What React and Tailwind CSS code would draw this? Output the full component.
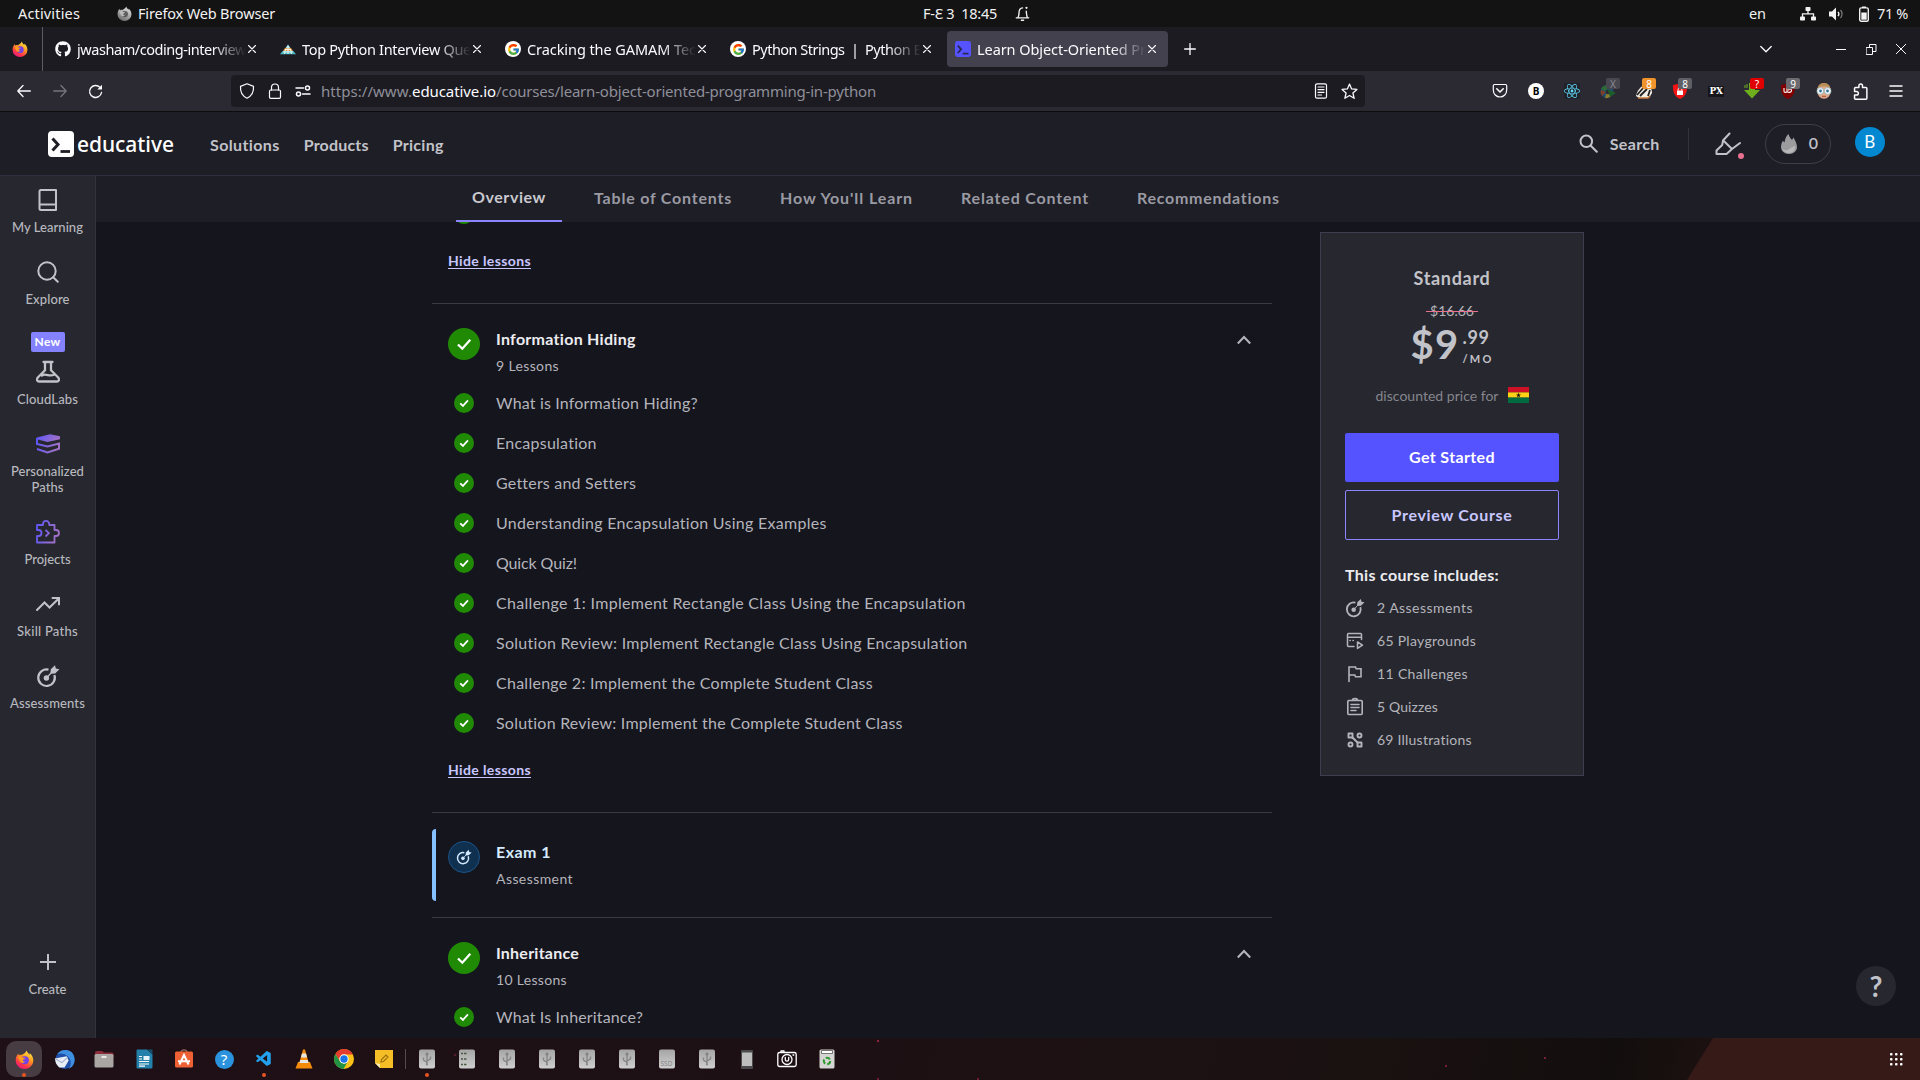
import React, { useLayoutEffect, useRef, useState } from "react";
import { FaGithub, FaReact } from "react-icons/fa";
import { FcGoogle } from "react-icons/fc";
import { VscVscode } from "react-icons/vsc";

/* Single line of text, tracked so that it spans `w` pixels. */
function Fit({ w, className = "", children }) {
  const ref = useRef(null);
  const [ls, setLs] = useState(0);
  useLayoutEffect(() => {
    const natural = ref.current.getBoundingClientRect().width;
    setLs((w - natural) / String(children).length);
  }, []);
  return (
    <span ref={ref} className={"inline-block whitespace-pre " + className} style={{ letterSpacing: ls + "px" }}>
      {children}
    </span>
  );
}

const Line = ({ size = 16, box = 16, sw = 1.2, className = "", children }) => (
  <svg width={size} height={size} viewBox={`0 0 ${box} ${box}`} fill="none" stroke="currentColor" strokeWidth={sw} strokeLinecap="round" strokeLinejoin="round" className={"shrink-0 " + className}>
    {children}
  </svg>
);

function Firefox({ size, gray }) {
  const id = gray ? "fg" : "fc" + size;
  return (
    <svg width={size} height={size} viewBox="0 0 20 20" className="shrink-0">
      <defs>
        <linearGradient id={id} x1="0.8" y1="0" x2="0.25" y2="1">
          <stop offset="0" stopColor={gray ? "#e8e8e8" : "#fff44f"} />
          <stop offset="0.4" stopColor={gray ? "#b5b5b5" : "#ff9a1f"} />
          <stop offset="0.75" stopColor={gray ? "#8a8a8a" : "#ff3647"} />
          <stop offset="1" stopColor={gray ? "#666" : "#e31587"} />
        </linearGradient>
      </defs>
      <path d="M12.4.5c.3 2 1.6 3 3 4.400.2-.7.1-1.300 0-1.700 2.300 1.800 3.900 4.700 3.900 7.800A9.300 9 0 0 1 .7 11c0-3.200 1.300-5.300 2.700-7.200.1 1 .3 1.400.7 1.800 1-.5 2-.6 3-.4C8.500 4 10.800 3.800 12.400.5z" fill={`url(#${id})`} />
      <circle cx="10.300" cy="10.800" r="4.300" fill={gray ? "#5d5d5d" : "#7542e5"} />
      <path d="M3 7.500c2-1.300 4-.7 5.200.5l2.600.3c-.3 1.200-2 1.400-2.400 2.200-.5 1.300 1 2.200 2.500 1.700-1.800 2.200-5 1.700-6-1L3 7.500z" fill={gray ? "#bbb" : "#ff9a1f"} />
    </svg>
  );
}

const EduMark = ({ size, h, bg, fg }) => (
  <svg width={size} height={h} viewBox="0 0 26 26" preserveAspectRatio="none" className="shrink-0">
    <rect width="26" height="26" rx="4" fill={bg} />
    <path d="M4.500 7.500l5.500 6-5.500 6" fill="none" stroke={fg} strokeWidth="3" />
    <path d="M12.500 20.500h9.500" stroke={fg} strokeWidth="2.800" />
  </svg>
);

const Pyramid = () => (
  <svg width="16" height="16" viewBox="0 0 16 16" className="shrink-0">
    <path d="M8 3.500l2.500 3.500h-5z" fill="#9adfe6" />
    <path d="M5 7h6l2 3H3z" fill="#e9a14b" />
    <path d="M2.600 10h10.800L16 13.300H0z" fill="#4bb9c4" />
    <path d="M4.500 13l1.200-5M8 13V5M11.500 13l-1.200-5M3 11h10M5 8.500h6" stroke="#eef8f8" strokeWidth=".9" />
  </svg>
);

const Close = () => (
  <Line size={8} box={8} sw={1.1}><path d="M.5.500l7 7M7.500.500l-7 7" /></Line>
);

function Tab({ icon, text, active }) {
  return (
    <div className={"mr-1 flex h-9 w-[221px] shrink-0 items-center rounded pl-2 " + (active ? "bg-[#42414d]" : "")}>
      <span className="flex w-[22px] shrink-0">{icon}</span>
      <span className="w-[169px] shrink-0 text-[14.5px] leading-9 text-[#fbfbfe] [mask-image:linear-gradient(to_right,#000_80%,transparent)]">
        <Fit w={169}>{text}</Fit>
      </span>
      <span className="ml-[2px] text-[#fbfbfe]"><Close /></span>
    </div>
  );
}

function TopBar() {
  return (
    <div className="flex h-[27px] items-center bg-[#131313] text-[14.5px] leading-[27px] text-[#f2f2f2]">
      <Fit w={62} className="ml-[18px]">Activities</Fit>
      <span className="ml-[37px] flex"><Firefox size={15} gray /></span>
      <Fit w={137} className="ml-[6px]">Firefox Web Browser</Fit>
      <Fit w={74} className="ml-[648px]">F-Ɛ 3  18:45</Fit>
      <Line size={17} box={15} sw={1.200} className="ml-[17px]">
        <path d="M2 11.300h11M3.500 11c1-1.300.8-3 1-5 .2-2 1-3.300 3-3.500M10.800 5.500c.2 2 .2 4 1 5.500M6.500 13.500h2" />
        <circle cx="11" cy="2.500" r="1" fill="currentColor" stroke="none" />
      </Line>
      <Fit w={17} className="ml-[718px]">en</Fit>
      <svg width="16" height="14" viewBox="0 0 16 14" fill="#f2f2f2" className="ml-[34px] shrink-0">
        <rect x="5.500" y="0" width="5" height="4" rx=".8" /><rect x="0" y="9.500" width="5" height="4" rx=".8" /><rect x="11" y="9.500" width="5" height="4" rx=".8" />
        <path d="M8 4v3M2.500 10V6.800h11V10" fill="none" stroke="#f2f2f2" strokeWidth="1.300" />
      </svg>
      <svg width="15" height="14" viewBox="0 0 15 14" className="ml-[13px] shrink-0">
        <path d="M0 4.500h3l4-4v13l-4-4H0z" fill="#f2f2f2" />
        <path d="M9 4.800c1 1.200 1 3.200 0 4.400" fill="none" stroke="#f2f2f2" strokeWidth="1.300" />
        <path d="M11.500 3c2 2.200 2 5.800 0 8" fill="none" stroke="#777" strokeWidth="1.300" />
      </svg>
      <svg width="10" height="16" viewBox="0 0 10 16" className="ml-[15px] shrink-0">
        <path d="M3 .5h4v1.500H3z" fill="#f2f2f2" />
        <rect x=".7" y="1.900" width="8.600" height="13.400" rx="1.500" fill="none" stroke="#f2f2f2" strokeWidth="1.400" />
        <rect x="2.300" y="6.500" width="5.400" height="7.200" fill="#f2f2f2" />
      </svg>
      <Fit w={31} className="ml-[8px]">71 %</Fit>
    </div>
  );
}

const GoogleIcon = () => (
  <span className="flex h-4 w-4 items-center justify-center rounded-full bg-white"><FcGoogle size={13} /></span>
);

function TabStrip() {
  return (
    <div className="flex h-[44px] items-center bg-[#1c1b22] text-[#fbfbfe]">
      <span className="ml-3 flex"><Firefox size={16} /></span>
      <span className="ml-[14px] mr-1 h-full w-px bg-[#5b5b66]" />
      <Tab icon={<FaGithub size={16} />} text="jwasham/coding-interview" />
      <Tab icon={<Pyramid />} text="Top Python Interview Que" />
      <Tab icon={<GoogleIcon />} text="Cracking the GAMAM Tec" />
      <Tab icon={<GoogleIcon />} text="Python Strings  |  Python E" />
      <Tab icon={<EduMark size={16} h={16} bg="#5553ff" fg="#2a2850" />} text="Learn Object-Oriented Pr" active />
      <Line size={12} box={12} sw={1.300} className="ml-3"><path d="M6 .6v10.800M.6 6h10.800" /></Line>
      <Line size={12} box={12} sw={1.300} className="ml-[564px]"><path d="M.8 3.500L6 8.800l5.200-5.300" /></Line>
      <Line size={10} box={10} sw={1} className="ml-16"><path d="M0 5.500h10" /></Line>
      <Line size={11} box={11} sw={1} className="ml-5"><path d="M.5 3.500h6v7h-6zM3.500 3.500v-3h6.500v7H6.500" strokeLinejoin="miter" /></Line>
      <Line size={10} box={10} sw={1} className="ml-[19px]"><path d="M.3.300l9.400 9.400M9.700.300L.3 9.700" /></Line>
    </div>
  );
}

const Ext = ({ children, badge, badgeClass = "" }) => (
  <span className="relative flex h-8 w-9 shrink-0 items-center justify-center">
    {children}
    {badge && (
      <span className={"absolute left-[16px] top-[3px] flex h-[11px] w-[14px] items-center justify-center rounded-[2px] text-[10px] leading-none text-white " + badgeClass}>
        {badge}
      </span>
    )}
  </span>
);

function Toolbar() {
  return (
    <div className="flex h-[41px] items-center border-b border-[#0c0c0d] bg-[#2b2a33] text-[#fbfbfe]">
      <Line size={14} box={14} sw={1.300} className="ml-[17px]"><path d="M13.300 7H.8M6 1.500L.8 7 6 12.500" /></Line>
      <Line size={14} box={14} sw={1.300} className="ml-[22px] text-[#75747c]"><path d="M.7 7h12.500M8 1.500L13.200 7 8 12.500" /></Line>
      <Line size={15} box={15} sw={1.400} className="ml-[21px]"><path d="M13.500 8.500A6 6 0 1 1 12 3.400" /><path d="M14 .8v4.700H9.300z" fill="currentColor" stroke="none" /></Line>
      <div className="ml-[128px] flex h-8 w-[1134px] shrink-0 items-center rounded bg-[#1c1b22]">
        <Line size={16} className="ml-2"><path d="M8 .8l6.500 2.600c.4 5-1.800 9.600-6.500 11.800C3.300 13 1.100 8.400 1.500 3.400z" /></Line>
        <Line size={16} className="ml-3"><path d="M4.500 7V4.500a3.500 3.500 0 0 1 7 0V7" /><rect x="2.500" y="7" width="11" height="8.300" rx="1.300" /></Line>
        <Line size={16} sw={1.500} className="ml-3"><path d="M1 5h7.500M7.500 11H15" /><circle cx="12.500" cy="5" r="2" /><circle cx="3.500" cy="11" r="2" /></Line>
        <span className="ml-[10px] flex text-[15px] text-[#8f8f99]">
          <Fit w={91}>https://www.</Fit>
          <Fit w={84} className="text-[#fbfbfe]">educative.io</Fit>
          <Fit w={380}>/courses/learn-object-oriented-programming-in-python</Fit>
        </span>
        <Line size={16} className="ml-[437px]"><rect x="2.500" y=".8" width="11" height="14.400" rx="1.500" /><path d="M5 4h6M5 6.700h6M5 9.300h6M5 12h3.500" /></Line>
        <Line size={17} className="ml-3"><path d="M8 1l2 4.600 5 .5-3.800 3.300 1.200 5L8 11.800l-4.400 2.600 1.200-5L1 6.100l5-.5z" /></Line>
      </div>
      <div className="ml-[117px] flex">
        <Ext><Line size={16}><path d="M2.500 1.500h11c.7 0 1.200.5 1.200 1.200V7c0 4-3 7-6.700 7S1.300 11 1.300 7V2.700c0-.7.5-1.200 1.200-1.200z" /><path d="M4.800 5.800L8 9l3.200-3.200" strokeWidth="1.600" /></Line></Ext>
        <Ext><span className="flex h-4 w-4 items-center justify-center rounded-full bg-white text-[10px] font-bold text-black">B</span></Ext>
        <Ext><span className="flex h-4 w-4 items-center justify-center bg-[#20232a] text-[#61dafb]"><FaReact size={16} /></span></Ext>
        <Ext badge="X" badgeClass="bg-[#484750] !text-[#8a8992]">
          <svg width="16" height="16" viewBox="0 0 16 16"><circle cx="7" cy="8.500" r="6.500" fill="#1f4f6e" /><path d="M1 6a6.500 6.500 0 0 1 8-3.500L6 8z" fill="#2c6b34" /><path d="M2 13a6.500 6.500 0 0 1-1-6l5 2z" fill="#7c3f2a" /><path d="M5 15a6.500 6.500 0 0 0 6-2L7 9z" fill="#8d7c2a" /><circle cx="8" cy="9" r="2.300" fill="#2b2a33" /><path d="M7.500 6L16 10l-6 4z" fill="#1e5c2c" /></svg>
        </Ext>
        <Ext badge="8" badgeClass="bg-[#f0932b]">
          <svg width="16" height="16" viewBox="0 0 16 16"><path d="M0 13C1 8 5 2 10 2c4 0 6 4 6 8l-3 5H3z" fill="#f3eee6" /><path d="M1 12l7-8M4 13l7-7M12 13l2-6" stroke="#222" strokeWidth="1.800" /><path d="M2 15h10l2-2" stroke="#c7783a" strokeWidth="1.500" fill="none" /></svg>
        </Ext>
        <Ext badge="8" badgeClass="bg-[#5f5f66]">
          <svg width="16" height="16" viewBox="0 0 16 16"><path d="M1 2l7-1.500L15 2c.5 7-1.500 11.500-7 14C2.500 13.500.5 9 1 2z" fill="#f11414" /><rect x="5" y="7.500" width="6" height="4.500" fill="#fff" /><path d="M6.200 7.500V6a1.800 1.800 0 0 1 3.600 0v1.500" fill="none" stroke="#fff" /></svg>
        </Ext>
        <Ext><span className="flex h-[11px] w-4 items-center justify-center bg-[#15151a] font-['DejaVu_Serif'] text-[9px] font-bold leading-none tracking-[-0.5px] text-white">PX</span></Ext>
        <Ext badge="?" badgeClass="bg-[#e00000]">
          <svg width="16" height="16" viewBox="0 0 16 16"><path d="M5 0h6v7h5l-8 8.500L0 7h5z" fill="#6fae1c" /><path d="M1 2v3M3 1v4" stroke="#6fae1c" /></svg>
        </Ext>
        <Ext badge="9" badgeClass="bg-[#6b6b70]">
          <svg width="16" height="16" viewBox="0 0 16 16"><path d="M1 2l7-1.500L15 2c.5 7-1.500 11.500-7 14C2.500 13.500.5 9 1 2z" fill="#800000" /><path d="M4 5v3.200c0 1.500 3 1.500 3 0V5v3.200c0 1.500 4.500 1.800 4.500-.6S8.500 5.800 8.500 7.500" fill="none" stroke="#fff" strokeWidth="1.100" /></svg>
        </Ext>
        <Ext>
          <svg width="16" height="16" viewBox="0 0 16 16"><ellipse cx="8" cy="8" rx="6.800" ry="7.800" fill="#e3a886" /><path d="M1.500 6C2 1.500 5 0 8 0s6 1.500 6.500 6L11 3.500H5z" fill="#b98d5a" /><circle cx="4.300" cy="8" r="3.400" fill="#eef4f8" stroke="#8aa" strokeWidth=".7" /><circle cx="11.700" cy="8" r="3.400" fill="#eef4f8" stroke="#8aa" strokeWidth=".7" /><circle cx="4.500" cy="8" r="1.400" fill="#3a6f96" /><circle cx="11.500" cy="8" r="1.400" fill="#3a6f96" /><path d="M6 13.300h4" stroke="#a04a3a" /></svg>
        </Ext>
        <Ext><Line size={17} box={16} sw={1.400}><path d="M6.500 4.200V2.600a1.700 1.700 0 0 1 3.400 0v1.600h3.200c.5 0 .9.400.9.900v9.200c0 .5-.4.900-.9.900H3.300a.9.900 0 0 1-.9-.9v-3h1.900a1.700 1.700 0 0 0 0-3.400H2.400V5.100c0-.5.4-.9.900-.9z" /></Line></Ext>
        <Ext><Line size={14} box={14} sw={1.500}><path d="M1 2h12M1 7h12M1 12h12" /></Line></Ext>
      </div>
    </div>
  );
}

function Header() {
  return (
    <header className="flex h-16 shrink-0 items-center border-b border-[#2f2e41] bg-[#1e1e26] text-[#c2c2c9]">
      <span className="ml-12 flex"><EduMark size={26} h={26} bg="#ffffff" fg="#1e1e26" /></span>
      <Fit w={97} className="ml-[3px] font-['Noto_Sans',sans-serif] text-[21px] font-medium leading-8 text-white">educative</Fit>
      <Fit w={70} className="ml-9 mt-[3px] text-[16px] font-bold">Solutions</Fit>
      <Fit w={65} className="ml-6 mt-[3px] text-[16px] font-bold">Products</Fit>
      <Fit w={51} className="ml-6 mt-[3px] text-[16px] font-bold">Pricing</Fit>
      <Line size={19} box={19} sw={2} className="ml-[1135px]"><circle cx="7.300" cy="7.300" r="5.800" /><path d="M11.800 11.800l6 6" /></Line>
      <Fit w={50} className="ml-3 text-[16px] font-bold">Search</Fit>
      <span className="ml-[28px] h-8 w-px bg-[#33333d]" />
      <span className="relative ml-[26px] flex">
        <Line size={26} box={26} sw={2}><path d="M14.500 2.500L8 9.500l-.8 4.500L1.500 19.500v3.500h10l5.500-5L25 12M8.300 9.500l8.700 8.500" /></Line>
        <span className="absolute bottom-[-2px] right-[-3px] h-[6px] w-[6px] rounded-full bg-[#e9708f]" />
      </span>
      <span className="ml-6 flex h-10 w-[66px] items-center rounded-full border border-[#3f3f4c]">
        <svg width="16" height="20" viewBox="0 0 16 20" className="ml-[15px] shrink-0">
          <path d="M7.500 0c.8 3 2 4.500 3.500 6 .6-.8.8-1.700 1.500-2.500C14 6.500 16 9.500 16 13c0 4-3.500 7-8 7s-8-3-8-7c0-3 1-5 2-6.500.4 1 .7 1.500 1.500 2C4 5 5 2 7.500 0z" fill="#9c9c9e" />
          <path d="M1.500 14c1.500 2.500 4 3 6 1.500s4-2.500 6.500-3.500c.5 4-2 7-6 7s-6.300-2.500-6.500-5z" fill="#b9b9bb" />
        </svg>
        <span className="-mt-px ml-3 text-[16px] font-semibold">0</span>
      </span>
      <span className="mb-1 ml-6 flex h-[30px] w-[30px] items-center justify-center rounded-full bg-[#0288d1] text-[17px] text-white">B</span>
    </header>
  );
}

const Target = ({ size = 24, color = "currentColor" }) => (
  <svg width={size} height={size} viewBox="0 0 24 24" fill="none" stroke={color} className="shrink-0">
    <path d="M12.500 5.600A8.300 8.300 0 1 0 18.400 11" strokeWidth="2.200" />
    <circle cx="10.400" cy="14" r="2.700" fill={color} stroke="none" />
    <path d="M10.400 14l7-7.500" strokeWidth="1.200" />
    <path d="M14.300 9.700l.5-4.500L19 1.200l.8 3.200 3.600.8-4.200 4.200z" fill={color} stroke="none" />
  </svg>
);

const Grad = () => (
  <defs>
    <linearGradient id="vp" x1="0" y1="0" x2="1" y2="0.300"><stop offset="0" stopColor="#5a55fb" /><stop offset="1" stopColor="#a070c8" /></linearGradient>
  </defs>
);

function SideItem({ icon, label, w, className = "" }) {
  return (
    <div className={"flex flex-col items-center text-[13px] font-medium leading-4 text-[#b8b8bf] " + className}>
      <span className="flex h-6 items-center text-[#c2c2c9]">{icon}</span>
      <span className="mb-px mt-[7px] flex flex-col items-center">
        {label.map((l, i) => <Fit key={l} w={w[i]}>{l}</Fit>)}
      </span>
    </div>
  );
}

function Sidebar() {
  return (
    <aside className="flex h-[862px] w-24 shrink-0 flex-col border-r border-[#33333d] bg-[#27282f] pt-3">
      <SideItem w={[71]} label={["My Learning"]} icon={<Line size={24} box={24} sw={2}><path d="M4 2h15.500v20H4.500A1.500 1.500 0 0 1 3 20.500V3.500A1.500 1.500 0 0 1 4.500 2M3.500 16.500h16" transform="translate(.5 0)" /></Line>} />
      <SideItem className="mt-6" w={[44]} label={["Explore"]} icon={<Line size={24} box={24} sw={2}><circle cx="11" cy="11" r="8.700" /><path d="M17.200 17.200l4.600 4.600" /></Line>} />
      <span className="mt-6 flex h-5 w-[34px] items-center justify-center self-center rounded-[2px] bg-[#8582ff] text-[12px] font-bold text-white"><Fit w={26}>New</Fit></span>
      <SideItem className="mt-2" w={[61]} label={["CloudLabs"]} icon={<Line size={24} box={24} sw={2.300}><path d="M7.500 2h9M9 2.500v7.700L1.800 17.500c-1.500 2.300-.8 4 1.500 4h17.400c2.300 0 3-1.700 1.500-4L15 10.200V2.500M6 15.500c3.500-2.500 7.500 1.500 12-.8" /></Line>} />
      <SideItem className="mt-6" w={[73, 32]} label={["Personalized", "Paths"]} icon={
        <svg width="24" height="24" viewBox="0 0 24 24"><Grad /><path d="M.8 5.500L14 2.300l10 2v3L11.500 10 .8 7.200z" fill="url(#vp)" /><path d="M1 6v6l10.500 2.500L23 11.500v5.200L11.500 20.500 1 17" fill="none" stroke="url(#vp)" strokeWidth="2" /></svg>} />
      <SideItem className="mt-6" w={[46]} label={["Projects"]} icon={
        <svg width="24" height="24" viewBox="0 0 24 24"><path d="M1 5h6V4a3 3 0 0 1 6.200 0v1h5.300v5h1.500a3 3 0 0 1 0 6h-1.500v6.500H1V16h1.500a3 3 0 0 0 0-6H1zM9.500 10l3.500 3.200L9.500 16.500" fill="none" stroke="url(#vp)" strokeWidth="1.800" strokeLinejoin="round" /></svg>} />
      <SideItem className="mt-6" w={[61]} label={["Skill Paths"]} icon={<Line size={24} box={24} sw={2}><path d="M1 18l7.500-7.500 5 5L23 6.200M16.500 6H23v6.500" strokeLinejoin="miter" /></Line>} />
      <SideItem className="mt-6" w={[75]} label={["Assessments"]} icon={<Target />} />
      <SideItem className="mt-[238px]" w={[38]} label={["Create"]} icon={<Line size={24} box={24} sw={2}><path d="M12 4v16M4 12h16" strokeLinecap="butt" /></Line>} />
    </aside>
  );
}

function SubNav() {
  return (
    <nav className="flex h-[46px] shrink-0 items-start bg-[#1e1e26] text-[16px] font-bold leading-[44px] text-[#9a9aa3]">
      <span className="ml-[360px] flex h-full w-[106px] justify-center border-b-2 border-[#8a85ff] leading-[42px] text-[#c9c9cf]">
        <Fit w={74}>Overview</Fit>
      </span>
      <Fit w={138} className="ml-8">Table of Contents</Fit>
      <Fit w={133} className="ml-12">How You'll Learn</Fit>
      <Fit w={128} className="ml-12">Related Content</Fit>
      <Fit w={143} className="ml-12">Recommendations</Fit>
    </nav>
  );
}

const Check = ({ big }) => (
  <svg width={big ? 32 : 20} height={big ? 32 : 20} viewBox="0 0 32 32" className="shrink-0">
    <circle cx="16" cy="16" r="16" fill="#208a05" />
    <path d="M10 16.500l4.300 4.200 8-9" fill="none" stroke="#fff" strokeWidth={big ? 2.300 : 2.800} />
  </svg>
);

const Up = () => (
  <Line size={16} sw={2} className="mr-5 mt-1"><path d="M1.800 11.500L8 5l6.200 6.500" strokeLinecap="butt" strokeLinejoin="miter" /></Line>
);

function SectionHead({ icon, title, w, sub, sw, titleClass = "text-[#ececf0]", chevron }) {
  return (
    <div className="flex items-start text-[#b4b4bb]">
      {icon}
      <div className="-mt-px ml-4 flex grow flex-col items-start">
        <Fit w={w} className={"text-[16px] font-bold leading-6 " + titleClass}>{title}</Fit>
        <Fit w={sw} className="mt-[3px] text-[14px] leading-6">{sub}</Fit>
      </div>
      {chevron && <Up />}
    </div>
  );
}

const Lesson = ({ children, w }) => (
  <div className="flex h-10 items-center pl-[6px] text-[16px] text-[#b4b4bb]">
    <Check />
    <Fit w={w} className="ml-[22px] pb-px">{children}</Fit>
  </div>
);

const HideLessons = () => (
  <Fit w={83} className="text-[14px] font-bold leading-5 text-[#c9c7ff] underline underline-offset-2">Hide lessons</Fit>
);

const lessons = [
  ["What is Information Hiding?", 202],
  ["Encapsulation", 101],
  ["Getters and Setters", 139],
  ["Understanding Encapsulation Using Examples", 331],
  ["Quick Quiz!", 81],
  ["Challenge 1: Implement Rectangle Class Using the Encapsulation", 470],
  ["Solution Review: Implement Rectangle Class Using Encapsulation", 472],
  ["Challenge 2: Implement the Complete Student Class", 377],
  ["Solution Review: Implement the Complete Student Class", 407],
];

function Syllabus() {
  return (
    <section className="ml-[336px] flex w-[840px] shrink-0 flex-col overflow-hidden">
      <div className="flex h-[3px] overflow-hidden pl-[22px]"><span className="-mt-[18px] flex shrink-0"><Check /></span></div>
      <div className="h-[79px] border-b border-[#3b3b47] pl-4 pt-[23px]"><HideLessons /></div>
      <div className="h-[509px] border-b border-[#3b3b47] pl-4 pt-6">
        <SectionHead icon={<Check big />} title="Information Hiding" w={140} sub="9 Lessons" sw={63} chevron />
        <div className="mt-[5px]">{lessons.map(([t, w]) => <Lesson key={t} w={w}>{t}</Lesson>)}</div>
        <div className="mt-[14px]"><HideLessons /></div>
      </div>
      <div className="h-[105px] border-b border-[#3b3b47] pt-4">
        <div className="h-[72px] rounded-l border-l-4 border-[#85c1ff] pl-3 pt-3">
          <SectionHead
            icon={<span className="flex h-8 w-8 shrink-0 items-center justify-center rounded-full border border-[#1a5389] bg-[#10304f]"><Target size={16} color="#d3e9ff" /></span>}
            title="Exam 1" w={55} sub="Assessment" sw={77} titleClass="text-[#d6ebff]"
          />
        </div>
      </div>
      <div className="pl-4 pt-6">
        <SectionHead icon={<Check big />} title="Inheritance" w={83} sub="10 Lessons" sw={71} chevron />
        <div className="mt-[5px]"><Lesson w={147}>What Is Inheritance?</Lesson></div>
      </div>
    </section>
  );
}

const includes = [
  ["2 Assessments", 96, <Target key="a" size={20} />],
  ["65 Playgrounds", 99, <Line key="b" size={20} box={20} sw={1.500}><path d="M9 15.500H3.500A1 1 0 0 1 2.500 14.500V3.500A1 1 0 0 1 3.500 2.500h12a1 1 0 0 1 1 1v5M2.500 6.300h14M5 9.500h.3M8 9.500h.3" /><path d="M12.500 11l5 3.200-5 3.200z" /></Line>],
  ["11 Challenges", 91, <Line key="c" size={20} box={20} sw={1.600}><path d="M4 17.500V3h6.500l.7 1.800H16v8h-5.500l-.7-1.800H4" strokeLinejoin="miter" /></Line>],
  ["5 Quizzes", 61, <Line key="d" size={20} box={20} sw={1.600}><rect x="2.800" y="3.500" width="14.400" height="14" rx="1" /><path d="M7.500 3.300c0-2.200 5-2.200 5 0M6 7.500h8M6 10.500h8M6 13.500h5" /></Line>],
  ["69 Illustrations", 95, <Line key="e" size={20} box={20} sw={1.900}><rect x="3.500" y="3.500" width="4" height="4" /><circle cx="14.500" cy="5.500" r="2" /><circle cx="5.500" cy="14.500" r="2" /><rect x="12.500" y="12.500" width="4" height="4" /><path d="M7.500 7.500l5 5" /></Line>],
];

function PriceCard() {
  return (
    <section className="ml-12 mt-[10px] flex h-[544px] w-[264px] shrink-0 flex-col items-center border border-[#3f3e50] bg-[#27282f] px-6 text-[#c2c2c9]">
      <Fit w={77} className="mt-[33px] text-[18px] font-bold leading-6">Standard</Fit>
      <span className="relative mt-[11px] px-1 text-[14px] leading-5 text-[#b4b4bb]">
        <Fit w={44}>$16.66</Fit>
        <span className="absolute inset-x-0 top-[10px] h-px bg-[#e9708f]" />
      </span>
      <div className="flex h-[46px] items-center">
        <Fit w={49} className="text-[40px] font-bold leading-[46px]">$9</Fit>
        <span className="ml-[3px] mt-[5px] flex flex-col items-start">
          <Fit w={27} className="text-[18px] font-bold leading-6">.99</Fit>
          <Fit w={31} className="text-[11px] font-bold leading-5">/MO</Fit>
        </span>
      </div>
      <div className="mt-[16px] flex h-6 items-center text-[14px] text-[#85858d]">
        <Fit w={123}>discounted price for</Fit>
        <svg width="21" height="16" viewBox="0 0 21 16" className="ml-[9px]">
          <path d="M0 0h21v5.400H0z" fill="#ce1126" /><path d="M0 5.400h21v5.200H0z" fill="#fcd116" /><path d="M0 10.600h21V16H0z" fill="#006b3f" />
          <path d="M10.500 5.600l.6 1.800H13l-1.500 1.100.6 1.900-1.600-1.200-1.600 1.200.6-1.900L8 7.400h1.900z" fill="#111" />
        </svg>
      </div>
      <button className="mt-[26px] flex h-[49px] w-[214px] shrink-0 items-center justify-center rounded-[2px] bg-[#5553ff] pb-[2px] text-[16px] font-bold text-white"><Fit w={86}>Get Started</Fit></button>
      <button className="mt-2 flex h-[50px] w-[214px] shrink-0 items-center justify-center rounded-[2px] border border-[#8a85ff] pb-px text-[16px] font-bold text-[#c9c7ff]"><Fit w={121}>Preview Course</Fit></button>
      <div className="mt-[23px] flex w-full flex-col items-start">
        <Fit w={154} className="text-[16px] font-bold leading-6 text-[#ececf0]">This course includes:</Fit>
        <div className="mt-1 text-[14px] text-[#b4b4bb]">
          {includes.map(([t, w, icon]) => (
            <div key={t} className="flex h-[33px] items-center">{icon}<Fit w={w} className="ml-3">{t}</Fit></div>
          ))}
        </div>
      </div>
    </section>
  );
}

const Usb = ({ kind = "usb" }) => (
  <svg width="20" height="20" viewBox="0 0 20 20">
    <defs><linearGradient id="dsk" x1="0" y1="0" x2="0" y2="1"><stop offset="0" stopColor="#a5a5a5" /><stop offset="1" stopColor="#cfcfcf" /></linearGradient></defs>
    <rect x="2" y=".5" width="16" height="19" rx="2" fill="url(#dsk)" />
    {kind === "usb" && <path d="M10 15V4.500M8.700 6L10 4l1.300 2M10 13.500L6.500 11V8.500M10 12l3.500-2.200V7.500M9 15.500h2" fill="none" stroke="#858585" strokeWidth="1.400" />}
    {kind === "ssd" && <text x="3.500" y="16.500" fontSize="6.500" fill="#858585" fontFamily="Noto Sans">SSD</text>}
    {kind === "bay" && <path d="M4 4.500h2M7 4.500h2.500M4 10h2M7 10h2.500M4 15.500h2M7 15.500h2.500" stroke="#4b5a42" strokeWidth="1.600" />}
  </svg>
);

const Thunderbird = () => (
  <svg width="21" height="21" viewBox="0 0 20 20"><circle cx="10.500" cy="10" r="9" fill="#1f4fa8" /><path d="M3 5C6 0 15-.5 18 4.500s2 12-4 14.500c3-4 2.500-9-1-12S6 4 3 5z" fill="#3f8fe0" /><path d="M1 9l11-2 2 4-4 6.500H5C2 15 1 12 1 9z" fill="#e9edf5" /><path d="M1 9l6.500 4L13 8" stroke="#9fb0cc" fill="none" /></svg>
);
const Files = () => (
  <svg width="20" height="18" viewBox="0 0 20 18"><path d="M1 3a2 2 0 0 1 2-2h5l2 1.500h8a1.500 1.500 0 0 1 1.500 1.500v3H1z" fill="#8d2c3c" /><rect x=".5" y="4" width="19" height="13.500" rx="1.500" fill="#a9a6a4" /><path d="M7.500 7h5" stroke="#fff" strokeWidth="1.500" /></svg>
);
const Writer = () => (
  <svg width="17" height="20" viewBox="0 0 17 20"><path d="M1.500.500H11l5.500 5V18a1.500 1.500 0 0 1-1.500 1.500H1.500A1 1 0 0 1 .5 18.500v-17a1 1 0 0 1 1-1z" fill="#2280ab" /><path d="M11.500.500h5v5z" fill="#13506e" /><path d="M3 7.500h3M3 10h3M3 12.500h10M3 15h10M3 17.200h6" stroke="#fff" strokeWidth="1.200" /><rect x="7.500" y="7" width="6" height="4" fill="#e4f3fa" /></svg>
);
const Software = () => (
  <svg width="20" height="20" viewBox="0 0 20 20"><path d="M7 3.500c0-3.500 6-3.500 6 0" fill="none" stroke="#8f6b5d" strokeWidth="1.200" /><rect x="1" y="2.500" width="18" height="16" rx="1.500" fill="#ee6135" /><path d="M5.500 15.500L10 6l4.500 9.500M4 12.300h12" fill="none" stroke="#fff" strokeWidth="2" /></svg>
);
const Vlc = () => (
  <svg width="18" height="20" viewBox="0 0 18 20"><path d="M3 13h12l2.500 6.500H.5z" fill="#f58a0b" /><path d="M8 .500h2L14 15c-2 1.600-8 1.600-10 0z" fill="#f58a0b" /><path d="M7 4.500h4l1.100 4H5.900zM5.200 11h7.600l.8 3H4.400z" fill="#e6e6e6" /></svg>
);
const Chrome = () => (
  <svg width="20" height="20" viewBox="0 0 20 20"><circle cx="10" cy="10" r="10" fill="#fbc116" /><path d="M10 5.500h8.900A10 10 0 0 0 1.400 5l4.700 7.300A4.600 4.600 0 0 1 10 5.500z" fill="#e33b2e" /><path d="M1.340 5A10 10 0 0 0 9.500 20l4.400-7.700a4.500 4.500 0 0 1-7.800 0z" fill="#229342" /><circle cx="10" cy="10" r="4.700" fill="#fff" /><circle cx="10" cy="10" r="3.700" fill="#1a73e8" /></svg>
);
const Notes = () => (
  <svg width="18" height="18" viewBox="0 0 18 18"><path d="M0 0h18v18H5l-5-5z" fill="#f5bd26" /><path d="M0 13l5 5v-4z" fill="#fff0b8" /><path d="M6 12l.5-2.500L11 5l2 2-4.500 4.500z" fill="none" stroke="#9a6e10" strokeWidth="1.100" /></svg>
);
const Phone = () => (
  <svg width="12" height="19" viewBox="0 0 12 19"><rect width="12" height="19" rx="1" fill="#4a4a4c" /><rect x="1" y="2.500" width="10" height="13.500" fill="#bdbdbd" /></svg>
);
const Camera = () => (
  <Line size={20} box={20} sw={1.300} className="text-white"><rect x=".8" y="3.500" width="18.400" height="14" rx="1.800" /><circle cx="10" cy="10.500" r="5" /><path d="M8.300 8.500v2a1.700 1.700 0 0 0 3.400 0v-2M4 3V2h3v1M16 6h.8" /></Line>
);
const Trash = () => (
  <svg width="16" height="20" viewBox="0 0 16 20"><rect x=".5" y=".5" width="15" height="19" rx="1.500" fill="#d5d5d3" /><path d="M2.500 1.500h11v3h-11z" fill="#fff" stroke="#444" strokeWidth=".7" /><circle cx="8" cy="12" r="3.200" fill="none" stroke="#2e9b2e" strokeWidth="2" strokeDasharray="4.700 2" /></svg>
);

const dockLeft = [
  [<Firefox key="f" size={19} />, true, true],
  [<Thunderbird key="t" />], [<Files key="fi" />], [<Writer key="w" />], [<Software key="s" />],
  [<span key="h" className="flex h-[19px] w-[19px] items-center justify-center rounded-full bg-[#2b93de] text-[15px] leading-none text-white">?</span>],
  [<VscVscode key="v" size={18} className="text-[#23a0ee]" />, true],
  [<Vlc key="vl" />], [<Chrome key="c" />], [<Notes key="n" />],
];
const dockRight = [
  [<Usb key="1" />, true], [<Usb key="2" kind="bay" />], [<Usb key="3" />], [<Usb key="4" />], [<Usb key="5" />], [<Usb key="6" />],
  [<Usb key="7" kind="ssd" />], [<Usb key="8" />], [<Phone key="9" />], [<Camera key="10" />], [<Trash key="11" />],
];

const DockCell = ({ item: [icon, running, active] }) => (
  <span className={"relative mr-1 flex h-9 w-9 shrink-0 items-center justify-center rounded-[10px] " + (active ? "bg-[#473c42]" : "")}>
    {icon}
    {running && <span className="absolute bottom-0 left-[16px] h-[4px] w-[4px] rounded-full bg-[#e95420]" />}
  </span>
);

function Dock() {
  return (
    <div className="relative flex h-[42px] shrink-0 items-center bg-[linear-gradient(100deg,#1e1016_0%,#1d1014_45%,#1b1112_65%,#1a1111_72%,#120e0d_84%,#1c1110_89%)] pl-[6px]">
      <svg width="1920" height="42" className="absolute inset-0">
        <path d="M1713 0H1920V42H1687z" fill="#351a17" />
        <g fill="#8a2540"><circle cx="455" cy="17" r="1.300" opacity=".5" /><circle cx="878" cy="3" r="1.200" /><circle cx="878" cy="41" r="1" /><circle cx="978" cy="41" r="1" /><circle cx="1446" cy="28" r="1.100" /><circle cx="1545" cy="20" r="1.100" /></g>
      </svg>
      {dockLeft.map((it, i) => <DockCell key={i} item={it} />)}
      <span className="relative -ml-px mr-[3px] h-5 w-px bg-[#544b4f]" />
      {dockRight.map((it, i) => <DockCell key={i} item={it} />)}
      <svg width="14" height="15" viewBox="0 0 14 15" className="relative ml-auto mr-[17px]" fill="#fff">
        {[0, 5, 10].map((x) => [0, 5, 10].map((y) => <rect key={x + "-" + y} x={x + 1} y={y + 1} width="2.500" height="2.500" rx=".8" />))}
      </svg>
    </div>
  );
}

export default function App() {
  return (
    <div className="flex h-[1080px] w-[1920px] flex-col overflow-hidden bg-[#15151e]">
      <div className="font-['Noto_Sans',sans-serif]">
        <TopBar />
        <TabStrip />
        <Toolbar />
      </div>
      <div className="flex h-[926px] shrink-0 flex-col font-['Lato',sans-serif]">
        <Header />
        <div className="flex h-[862px]">
          <Sidebar />
          <div className="flex grow flex-col">
            <SubNav />
            <div className="relative flex h-[816px] items-start overflow-hidden">
              <Syllabus />
              <PriceCard />
              <button className="absolute bottom-8 right-6 flex h-10 w-10 items-center justify-center rounded-full bg-[#27282f] text-[28px] font-bold text-[#c2c2c9]">?</button>
            </div>
          </div>
        </div>
      </div>
      <div className="font-['Noto_Sans',sans-serif]"><Dock /></div>
    </div>
  );
}
